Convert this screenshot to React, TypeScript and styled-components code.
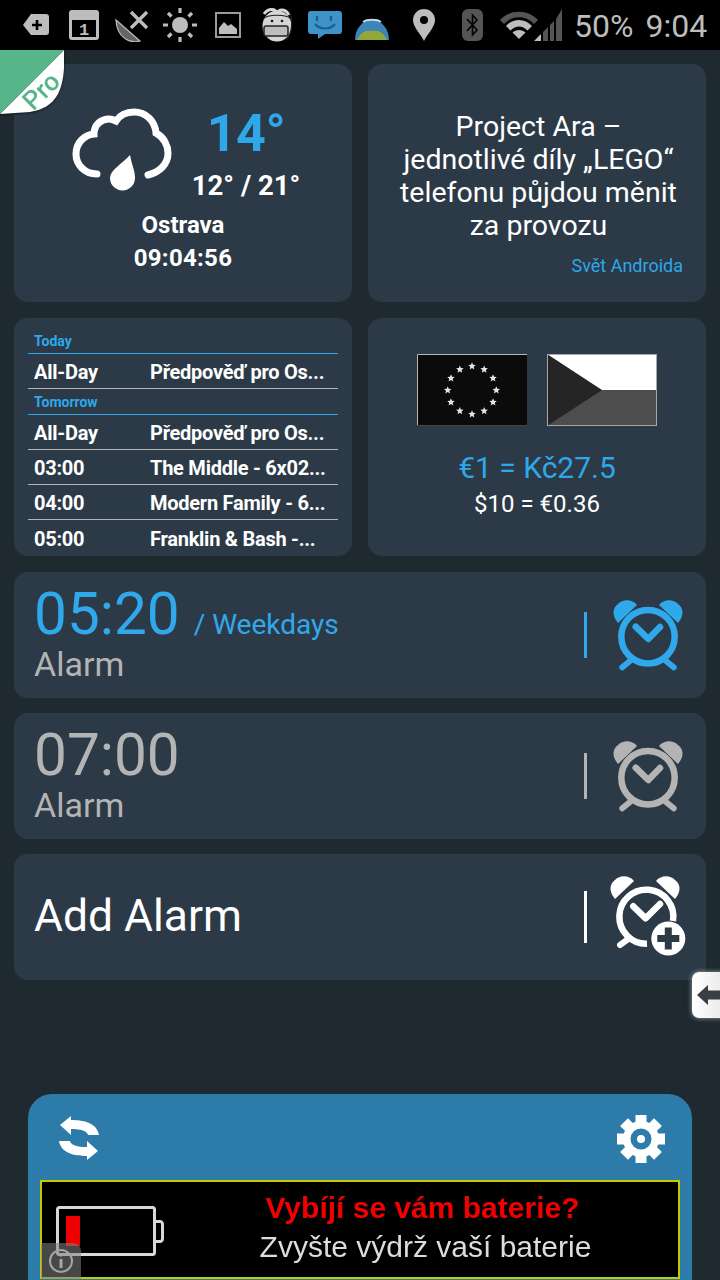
import React from "react";
import styled, { createGlobalStyle } from "styled-components";

const Global = createGlobalStyle`
  html, body { margin: 0; padding: 0; background: #1f2a30; }
  * { box-sizing: border-box; }
`;

const Screen = styled.div`
  position: relative;
  width: 720px;
  height: 1280px;
  overflow: hidden;
  display: flex;
  flex-direction: column;
  background: #1f2a30;
  font-family: Roboto, "Noto Sans", sans-serif;
  color: #fff;
`;

const StatusBar = styled.header`
  height: 50px;
  flex: none;
  background: #000;
  display: flex;
  align-items: center;
`;
const StatusIcon = styled.svg<{ $ml: number; $mt?: number }>`
  flex: none;
  display: block;
  margin-left: ${(p) => p.$ml}px;
  margin-top: ${(p) => p.$mt ?? 0}px;
`;
const StatusText = styled.span<{ $ml: number }>`
  margin-left: ${(p) => p.$ml}px;
  margin-top: 2px;
  font-size: 32px;
  line-height: 48px;
  color: #bdbdbd;
  white-space: nowrap;
`;

const Main = styled.main`
  flex: 1;
  display: flex;
  flex-direction: column;
  padding: 14px 14px 0;
  min-height: 0;
`;
const Grid = styled.section`
  display: grid;
  grid-template-columns: 338px 338px;
  grid-auto-rows: 238px;
  gap: 16px;
  margin-bottom: 16px;
`;
const Card = styled.article`
  background: #2c3a48;
  border-radius: 14px;
  overflow: hidden;
`;

const WeatherCard = styled(Card)`
  display: flex;
  flex-direction: column;
  padding-top: 44px;
`;
const WeatherTop = styled.div`
  display: flex;
  align-items: flex-start;
  padding-left: 58px;
  height: 101px;
`;
const Temps = styled.div`
  display: flex;
  flex-direction: column;
  align-items: center;
  width: 110px;
  margin-left: 19px;
`;
const Temp = styled.div`
  font-size: 52px;
  font-weight: 700;
  line-height: 52px;
  letter-spacing: -0.5px;
  color: #2ea8e8;
`;
const Range = styled.div`
  font-size: 27.5px;
  font-weight: 700;
  line-height: 32px;
  margin-top: 10px;
  white-space: nowrap;
`;
const City = styled.div`
  width: 338px;
  text-align: center;
  font-size: 24px;
  font-weight: 700;
  line-height: 33px;
`;
const Clock = styled(City)`
  letter-spacing: 0.3px;
`;

const NewsCard = styled(Card)`
  display: flex;
  flex-direction: column;
  padding: 46px 20px 0 23px;
`;
const Headline = styled.div`
  text-align: center;
  font-size: 28.5px;
  line-height: 33px;
  white-space: nowrap;
`;
const Source = styled.div`
  text-align: right;
  color: #2ea8e8;
  font-size: 18px;
  line-height: 22px;
  margin: 13px 3px 0 0;
`;

const CalendarCard = styled(Card)`
  padding: 10px 14px 0;
`;
const DayHead = styled.div`
  height: 26px;
  padding: 5px 6px 0;
  font-size: 14px;
  line-height: 16px;
  font-weight: 700;
  color: #2ea8e8;
  border-bottom: 1px solid #2ea8e8;
`;
const EventRow = styled.div<{ $last?: boolean }>`
  height: 35px;
  display: flex;
  align-items: center;
  padding: 2px 6px 0;
  font-size: 20px;
  font-weight: 700;
  white-space: nowrap;
  letter-spacing: -0.25px;
  border-bottom: ${(p) => (p.$last ? "none" : "1px solid #b5b5b5")};
`;
const EventTime = styled.span`
  width: 116px;
  flex: none;
`;

const CurrencyCard = styled(Card)`
  display: flex;
  flex-direction: column;
  align-items: center;
  padding-top: 36px;
`;
const Flags = styled.div`
  display: flex;
  gap: 20px;
  margin-bottom: 24px;
`;
const Flag = styled.svg`
  display: block;
`;
const RateMain = styled.div`
  font-size: 30px;
  line-height: 36px;
  color: #2ea8e8;
`;
const RateSub = styled.div`
  font-size: 24px;
  line-height: 36px;
`;

const AlarmList = styled.section`
  display: flex;
  flex-direction: column;
  gap: 15px;
`;
const AlarmRow = styled.article`
  height: 126px;
  background: #2c3a48;
  border-radius: 14px;
  display: flex;
  align-items: center;
  padding: 0 23px 0 20px;
`;
const AlarmText = styled.div<{ $color: string }>`
  flex: 1;
  color: ${(p) => p.$color};
  padding-bottom: 6px;
`;
const AlarmTimeLine = styled.div`
  display: flex;
  align-items: baseline;
  height: 64px;
  line-height: 64px;
`;
const AlarmTime = styled.span`
  font-size: 58.5px;
`;
const AlarmRepeat = styled.span`
  font-size: 28px;
  margin-left: 14px;
`;
const AlarmLabel = styled.div<{ $color?: string }>`
  font-size: 34px;
  line-height: 36px;
  ${(p) => (p.$color ? `color: ${p.$color};` : "")}
`;
const AddLabel = styled.div`
  flex: 1;
  font-size: 44.4px;
  line-height: 52px;
  padding-bottom: 2px;
`;
const Divider = styled.span<{ $color: string; $h: number }>`
  flex: none;
  width: 3px;
  height: ${(p) => p.$h}px;
  background: ${(p) => p.$color};
`;
const AlarmIconSlot = styled.div`
  flex: none;
  width: 70px;
  margin-left: 26px;
  display: flex;
  justify-content: center;
  svg { flex: none; display: block; overflow: visible; }
`;

const BottomPanel = styled.section`
  flex: none;
  margin: auto 14px 0;
  height: 186px;
  background: #2c7ba8;
  border-radius: 24px 24px 0 0;
  padding: 12px 12px 0;
  overflow: hidden;
`;
const PanelBar = styled.div`
  height: 74px;
  display: flex;
  justify-content: space-between;
  padding: 9px 15px 0 19px;
`;
const Ad = styled.div`
  position: relative;
  height: 99px;
  background: #000;
  border: 2px solid #c8c800;
  display: flex;
  align-items: center;
  padding-left: 14px;
  svg.battery { flex: none; margin-top: 3px; filter: blur(0.4px); }
`;
const AdBody = styled.div`
  flex: 1;
  text-align: center;
  font-family: "Liberation Sans", Arial, sans-serif;
  padding: 0 0 4px 3px;
  white-space: nowrap;
  filter: blur(0.4px);
`;
const AdTitle = styled.div`
  color: #f00000;
  font-size: 30px;
  font-weight: 700;
  line-height: 38px;
`;
const AdText = styled.div`
  color: #dcdcdc;
  font-size: 30px;
  line-height: 39px;
  padding-left: 6px;
`;
const InfoBadge = styled.div`
  position: absolute;
  left: -1px;
  bottom: -2px;
  width: 40px;
  height: 36px;
  background: rgba(130, 130, 130, 0.55);
  border-top-right-radius: 8px;
  display: flex;
  align-items: center;
  justify-content: center;
`;

const ProCorner = styled.div`
  position: absolute;
  left: 0;
  top: 50px;
  width: 64px;
  height: 66px;
  filter: drop-shadow(0 1px 1px rgba(0, 0, 0, 0.6));
`;
const ProText = styled.span`
  position: absolute;
  left: 21px;
  top: 27px;
  font-size: 26px;
  font-weight: 500;
  line-height: 28px;
  color: #58b58a;
  transform: rotate(-45deg);
`;
const BackTab = styled.div`
  position: absolute;
  right: -6px;
  top: 972px;
  width: 34px;
  height: 46px;
  background: linear-gradient(90deg, #fff, #e8e8e8);
  border-radius: 7px 0 0 7px;
  box-shadow: 0 0 5px rgba(255, 255, 255, 0.55);
  display: flex;
  align-items: center;
  padding-left: 5px;
  svg { filter: blur(0.6px); }
`;

const ALARM_BLUE = "#30a9ec";
const ALARM_GRAY = "#b4b4b4";

const starPoints = (cx: number, cy: number, r: number) =>
  Array.from({ length: 10 }, (_, i) => {
    const a = (Math.PI / 5) * i - Math.PI / 2;
    const rad = i % 2 ? r * 0.45 : r;
    return `${(cx + rad * Math.cos(a)).toFixed(2)},${(cy + rad * Math.sin(a)).toFixed(2)}`;
  }).join(" ");

const EuFlag = () => (
  <Flag width="110" height="72" viewBox="0 0 110 72">
    <rect width="110" height="72" fill="#0b0b0b" />
    <path d="M.5 72V.5H110" fill="none" stroke="#b5b5b5" />
    <path d="M0 71.5H110" stroke="#444" />
    {Array.from({ length: 12 }, (_, i) => {
      const a = (Math.PI / 6) * i;
      return (
        <polygon
          key={i}
          points={starPoints(55 + 24.3 * Math.sin(a), 36.2 - 24 * Math.cos(a), 4)}
          fill="#e4e4e4"
        />
      );
    })}
  </Flag>
);

const CzFlag = () => (
  <Flag width="110" height="72" viewBox="0 0 110 72">
    <rect width="110" height="36" fill="#fff" />
    <rect y="36" width="110" height="36" fill="#4d4d4d" />
    <polygon points="0,0 55,36 0,72" fill="#252525" />
    <rect x=".5" y=".5" width="109" height="71" fill="none" stroke="#a8a8a8" />
  </Flag>
);

const Bell = ({ color }: { color: string }) => (
  <>
    <path d="M5 23C-1 16 -1 8 5 4C10 -1 19 -1 24 5Z" fill={color} />
    <path d="M65 23C71 16 71 8 65 4C60 -1 51 -1 46 5Z" fill={color} />
  </>
);

const AlarmClock = ({ color }: { color: string }) => (
  <svg width="70" height="70" viewBox="0 0 70 70">
    <Bell color={color} />
    <circle cx="35" cy="36.7" r="26.7" fill="none" stroke={color} strokeWidth="6.5" />
    <path d="M22.7 26.7L35.3 39L47 27" fill="none" stroke={color} strokeWidth="6.5" strokeLinecap="round" strokeLinejoin="round" />
    <path d="M17 61L9.3 67.3M53 61L60.7 67.3" stroke={color} strokeWidth="6" strokeLinecap="round" />
  </svg>
);

const AddClock = () => (
  <svg width="76" height="80" viewBox="0 0 76 80">
    <g transform="translate(0 -1)"><Bell color="#fff" /></g>
    <path d="M63 44A27 27 0 1 0 37 66.7" fill="none" stroke="#fff" strokeWidth="6.5" />
    <path d="M23.3 29.3L35.7 41.3L50 27" fill="none" stroke="#fff" strokeWidth="6.5" strokeLinecap="round" strokeLinejoin="round" />
    <path d="M18.3 62L10 68" stroke="#fff" strokeWidth="6" strokeLinecap="round" />
    <circle cx="58.3" cy="61.5" r="17" fill="#fff" />
    <path d="M58.3 50.500V72.500M47.300 61.500H69.300" stroke="#2c3a48" strokeWidth="7" />
  </svg>
);

const CloudIcon = () => (
  <svg width="100" height="86" viewBox="0 0 100 86">
    <path
      d="M25 66C12 66 4 56 4 46C4 35 12 27 22 26C22 16 30 11 37 11C40 11 42 12 44 13C48 7 54 4 62 4C74 4 83 13 84 25C92 29 96 38 96 45C96 56 88 64 76 67"
      fill="none"
      stroke="#fff"
      strokeWidth="7"
      strokeLinecap="round"
    />
    <path d="M58 47C60 58 63 62 63 70A12.5 12.5 0 0 1 38 70C38 62 50 56 58 47Z" fill="#fff" />
  </svg>
);

const gearTeeth = [0, 45, 90, 135];

const App = () => (
  <Screen>
    <Global />
    <StatusBar>
      <StatusIcon $ml={23} width="26" height="22" viewBox="0 0 26 22">
        <path d="M8 0H23A3 3 0 0 1 26 3V18A3 3 0 0 1 23 21H8L0 11Z" fill="#bdbdbd" />
        <path d="M14 6V16M9 11H19" stroke="#000" strokeWidth="2.6" />
      </StatusIcon>
      <StatusIcon $ml={20} width="30" height="30" viewBox="0 0 30 30">
        <rect width="30" height="30" rx="3" fill="#bdbdbd" />
        <rect x="3" y="10" width="24" height="17" fill="#000" />
        <text x="15" y="25" textAnchor="middle" fontFamily="Liberation Mono" fontWeight="700" fontSize="17" fill="#bdbdbd">1</text>
      </StatusIcon>
      <StatusIcon $ml={16} width="34" height="34" viewBox="0 0 34 34">
        <path d="M16 4L32 20M32 4L16 20" stroke="#bdbdbd" strokeWidth="3.4" />
        <path d="M1 12L25 33C15 36 2 30 1 12Z" fill="#666" stroke="#bdbdbd" strokeWidth="1.2" />
      </StatusIcon>
      <StatusIcon $ml={14} width="34" height="34" viewBox="0 0 34 34">
        <circle cx="17" cy="17" r="8" fill="#bdbdbd" />
        <path d="M17 0V5M17 29V34M0 17H5M29 17H34M5 5L8.5 8.5M25.500 25.500L29 29M29 5L25.500 8.500M8.500 25.500L5 29" stroke="#bdbdbd" strokeWidth="3.2" />
      </StatusIcon>
      <StatusIcon $ml={18} width="26" height="26" viewBox="0 0 26 26">
        <rect x="1" y="1" width="24" height="24" fill="none" stroke="#9a9a9a" strokeWidth="2" />
        <path d="M4 22V16L9 10L13 14L16 12L22 17V22Z" fill="#bdbdbd" />
      </StatusIcon>
      <StatusIcon $ml={21} width="30" height="34" viewBox="0 0 30 34">
        <ellipse cx="15" cy="18" rx="14.500" ry="15.500" fill="#d5d5d5" />
        <path d="M2 6C6 0 14 0 15 6C17 0 24 1 27 7" fill="none" stroke="#d5d5d5" strokeWidth="3" />
        <rect x="2" y="18" width="24" height="10" rx="2" fill="#bdbdbd" stroke="#222" strokeWidth="1.5" />
        <circle cx="10" cy="13" r="1.300" fill="#111" />
        <circle cx="20" cy="13" r="1.300" fill="#111" />
        <path d="M1 11C5 6 25 6 29 11M27 3C31 10 31 25 24 32" fill="none" stroke="#222" strokeWidth="1.200" />
      </StatusIcon>
      <StatusIcon $ml={16} width="34" height="28" viewBox="0 0 34 28">
        <path d="M3 0H31A3 3 0 0 1 34 3V20A3 3 0 0 1 31 23H17L10 28V23H3A3 3 0 0 1 0 20V3A3 3 0 0 1 3 0Z" fill="#3d94c8" />
        <path d="M9 5V10M23 5V10" stroke="#1d5e88" strokeWidth="2.200" />
        <path d="M7 13C12 19 22 19 27 13" fill="none" stroke="#1d5e88" strokeWidth="2" />
      </StatusIcon>
      <StatusIcon $ml={13} $mt={8} width="34" height="22" viewBox="0 0 34 22">
        <path d="M0 22A17 20 0 0 1 34 22Z" fill="#3b85b8" />
        <path d="M2 22C6 14 10 12 17 13C24 12 28 14 32 22Z" fill="#93a83a" />
        <path d="M8 4C12 1 22 1 26 4" fill="none" stroke="#c3dbe8" strokeWidth="2" />
      </StatusIcon>
      <StatusIcon $ml={24} width="22" height="32" viewBox="0 0 22 32">
        <path fillRule="evenodd" d="M11 0A11 11 0 0 1 22 11C22 18 15 24 11 32C7 24 0 18 0 11A11 11 0 0 1 11 0ZM11 7A4 4 0 1 0 11 15A4 4 0 0 0 11 7Z" fill="#bdbdbd" />
      </StatusIcon>
      <StatusIcon $ml={27} width="21" height="32" viewBox="0 0 21 32">
        <rect width="21" height="32" rx="6" fill="#555" />
        <path d="M5 10L15 21L10.500 26V6L15 11L5 22" fill="none" stroke="#000" strokeWidth="1.600" />
      </StatusIcon>
      <StatusIcon $ml={17} width="38" height="30" viewBox="0 0 38 30">
        <path d="M0 10C10 -1 28 -1 38 10L34 14C26 5 12 5 4 14Z" fill="#555" />
        <path d="M6 16C13 8 25 8 32 16L27.500 20.500C22 15 16 15 10.500 20.500Z" fill="#bdbdbd" />
        <path d="M12.500 22.500C16 19 22 19 25.500 22.500L19 29Z" fill="#bdbdbd" />
      </StatusIcon>
      <StatusIcon $ml={-4} width="28" height="32" viewBox="0 0 28 32">
        <path d="M0 32L7 25V32Z" fill="#bdbdbd" />
        <path d="M9 23L14 18V32H9ZM16 16L20 12V32H16ZM22 10L28 0V32H22Z" fill="#555" />
      </StatusIcon>
      <StatusText $ml={12}>50%</StatusText>
      <StatusText $ml={12}>9:04</StatusText>
    </StatusBar>

    <Main>
      <Grid>
        <WeatherCard>
          <WeatherTop>
            <CloudIcon />
            <Temps>
              <Temp>14°</Temp>
              <Range>12° / 21°</Range>
            </Temps>
          </WeatherTop>
          <City>Ostrava</City>
          <Clock>09:04:56</Clock>
        </WeatherCard>

        <NewsCard>
          <Headline>
            Project Ara –<br />
            jednotlivé díly „LEGO“<br />
            telefonu půjdou měnit<br />
            za provozu
          </Headline>
          <Source>Svět Androida</Source>
        </NewsCard>

        <CalendarCard>
          <DayHead>Today</DayHead>
          <EventRow><EventTime>All-Day</EventTime>Předpověď pro Os...</EventRow>
          <DayHead>Tomorrow</DayHead>
          <EventRow><EventTime>All-Day</EventTime>Předpověď pro Os...</EventRow>
          <EventRow><EventTime>03:00</EventTime>The Middle - 6x02...</EventRow>
          <EventRow><EventTime>04:00</EventTime>Modern Family - 6...</EventRow>
          <EventRow $last><EventTime>05:00</EventTime>Franklin &amp; Bash -...</EventRow>
        </CalendarCard>

        <CurrencyCard>
          <Flags>
            <EuFlag />
            <CzFlag />
          </Flags>
          <RateMain>€1 = Kč27.5</RateMain>
          <RateSub>$10 = €0.36</RateSub>
        </CurrencyCard>
      </Grid>

      <AlarmList>
        <AlarmRow>
          <AlarmText $color={ALARM_BLUE}>
            <AlarmTimeLine>
              <AlarmTime>05:20</AlarmTime>
              <AlarmRepeat>/ Weekdays</AlarmRepeat>
            </AlarmTimeLine>
            <AlarmLabel $color={ALARM_GRAY}>Alarm</AlarmLabel>
          </AlarmText>
          <Divider $color={ALARM_BLUE} $h={46} />
          <AlarmIconSlot><AlarmClock color={ALARM_BLUE} /></AlarmIconSlot>
        </AlarmRow>
        <AlarmRow>
          <AlarmText $color={ALARM_GRAY}>
            <AlarmTimeLine><AlarmTime>07:00</AlarmTime></AlarmTimeLine>
            <AlarmLabel>Alarm</AlarmLabel>
          </AlarmText>
          <Divider $color={ALARM_GRAY} $h={46} />
          <AlarmIconSlot><AlarmClock color={ALARM_GRAY} /></AlarmIconSlot>
        </AlarmRow>
        <AlarmRow>
          <AddLabel>Add Alarm</AddLabel>
          <Divider $color="#fff" $h={52} />
          <AlarmIconSlot><AddClock /></AlarmIconSlot>
        </AlarmRow>
      </AlarmList>

      <BottomPanel>
        <PanelBar>
          <svg width="40" height="46" viewBox="0 0 40 46">
            <path d="M1 10L12 1V5C25 5 38 8 40 20H29C28 16 22 14 12 14V20Z" fill="#fff" />
            <path d="M39 36L28 45V41C15 41 2 38 0 26H11C12 30 18 32 28 32V26Z" fill="#fff" />
          </svg>
          <svg width="48" height="48" viewBox="0 0 48 48">
            {gearTeeth.map((a) => (
              <rect key={a} x="18.500" y="0" width="11" height="48" fill="#fff" transform={`rotate(${a} 24 24)`} />
            ))}
            <circle cx="24" cy="24" r="18" fill="#fff" />
            <circle cx="24" cy="24" r="10.500" fill="#2c7ba8" />
            <circle cx="24" cy="24" r="4" fill="#fff" />
          </svg>
        </PanelBar>
        <Ad>
          <svg className="battery" width="108" height="50" viewBox="0 0 108 50">
            <rect x="1.500" y="1.500" width="97" height="47" rx="2" fill="none" stroke="#d8d8d8" strokeWidth="3" />
            <path d="M98.500 15.500H104A2.500 2.500 0 0 1 106.500 18V33A2.500 2.500 0 0 1 104 35.500H98.500" fill="none" stroke="#d8d8d8" strokeWidth="3" />
            <rect x="10" y="10" width="14" height="30" fill="#ee0000" />
          </svg>
          <AdBody>
            <AdTitle>Vybíjí se vám baterie?</AdTitle>
            <AdText>Zvyšte výdrž vaší baterie</AdText>
          </AdBody>
          <InfoBadge>
            <svg width="26" height="26" viewBox="0 0 26 26">
              <circle cx="13" cy="13" r="11" fill="none" stroke="#a5a5a5" strokeWidth="2" />
              <path d="M13 11V20" stroke="#a5a5a5" strokeWidth="3" />
              <circle cx="13" cy="7" r="1.700" fill="#a5a5a5" />
            </svg>
          </InfoBadge>
        </Ad>
      </BottomPanel>
    </Main>

    <ProCorner>
      <svg width="64" height="66" viewBox="0 0 64 66">
        <path d="M0 64L64 0C65 20 63 34 58 44C52 55 42 60 30 62Z" fill="#fff" />
        <path d="M0 0H64L0 64Z" fill="#58b58a" />
      </svg>
      <ProText>Pro</ProText>
    </ProCorner>

    <BackTab>
      <svg width="24" height="22" viewBox="0 0 24 22">
        <path d="M0 11L11 1V6.500H24V15.500H11V21Z" fill="#3a3f44" />
      </svg>
    </BackTab>
  </Screen>
);

export default App;
